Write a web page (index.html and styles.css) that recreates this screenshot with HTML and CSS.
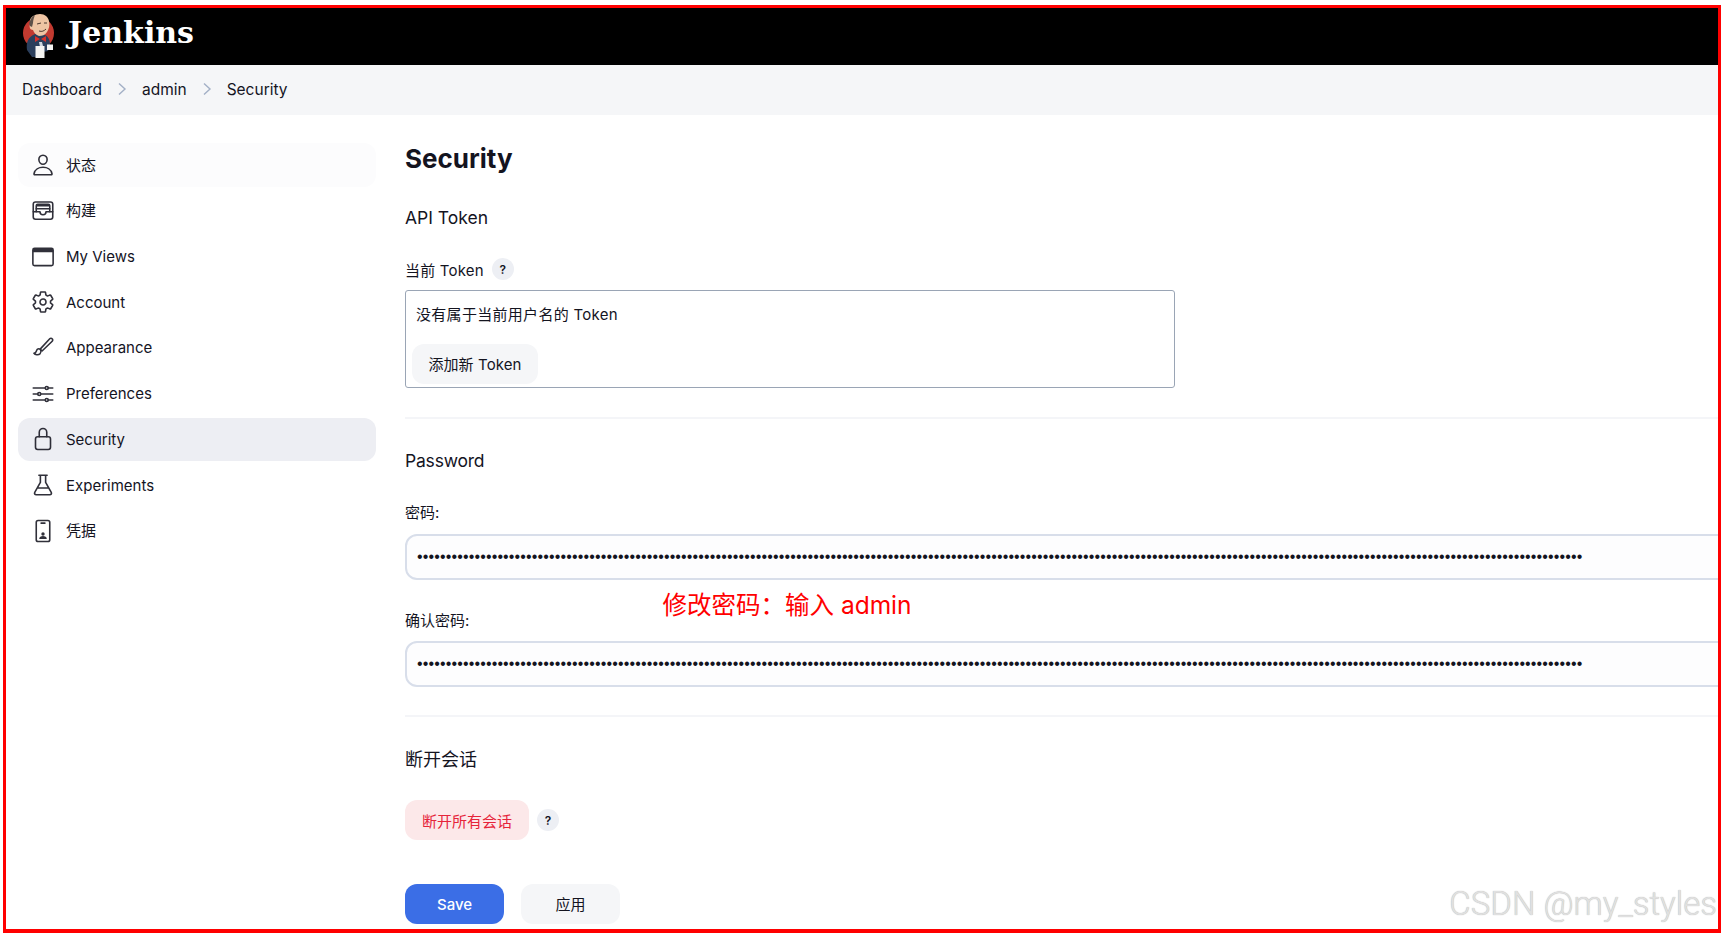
FILE: index.html
```html
<!DOCTYPE html>
<html lang="zh-CN">
<head>
<meta charset="utf-8">
<title>Security - Jenkins</title>
<link rel="stylesheet" href="styles.css">
</head>
<body>
<div class="frame">
  <header class="topbar">
    <svg class="logo" viewBox="0 0 36 46" aria-hidden="true">
      <circle cx="16.500" cy="20" r="15.500" fill="#c23a30"/>
      <path d="M5 37c-1-8 1-13 8-16l10 1c4 2 5 6 5 10l-2 6-5 1v5H10z" fill="#2b3f5c"/>
      <path d="M8 8c0-4 5-7 10-7 5 0 8 3 9 7 1 4 0 8-2 11-2 3-5 4-8 4-3-1-5-3-6-6-3 0-4-3-3-6z" fill="#eec5a4"/>
      <path d="M8 8c1-3 3-5 5-6-1 3-2 5-2 8l-1 4-2-1c-1-2-1-3 0-5z" fill="#5d5149"/>
      <path d="M18 26l-5-3v6zM19 26l5-3v6z" fill="#d6312a"/>
      <path d="M17 29l3 0 1 4-3 1z" fill="#cfd6de"/>
      <path d="M15 11l4-1M22 10l3 0M17 18c3 1 5 0 7-2" stroke="#4d3a30" stroke-width="1" fill="none"/>
      <path d="M13.500 33h9v12h-9z" fill="#f4f4f2"/>
      <path d="M25 31.500h6v5.500h-6z" fill="#f4f4f2"/>
    </svg>
    <span class="wordmark">Jenkins</span>
  </header>
  <nav class="crumbs">
    <a class="crumb">Dashboard</a>
    <svg class="chev" viewBox="0 0 10 14"><path d="M2 1.5l6 5.5-6 5.500"/></svg>
    <a class="crumb">admin</a>
    <svg class="chev" viewBox="0 0 10 14"><path d="M2 1.5l6 5.5-6 5.500"/></svg>
    <a class="crumb">Security</a>
  </nav>
  <div class="content">
    <aside class="side">
      <a class="item item-hover">
        <svg class="ico" viewBox="0 0 512 512"><path d="M344 144c-3.920 52.870-44 96-88 96s-84.150-43.120-88-96c-4-55 35-96 88-96s92 42 88 96z"/><path d="M256 304c-87 0-175.300 48-191.640 138.600C62.390 453.520 68.570 464 80 464h352c11.440 0 17.620-10.480 15.650-21.400C431.300 352 343 304 256 304z"/></svg>
        <span class="cjk">状态</span>
      </a>
      <a class="item">
        <svg class="ico" viewBox="0 0 512 512"><path d="M96 64h320a48 48 0 0148 48v272a48 48 0 01-48 48H96a48 48 0 01-48-48V112a48 48 0 0148-48z"/><path d="M48 272h144M320 272h144M192 272a64 64 0 00128 0M128 144h256M112 208h288"/><path d="M112 272V144q0-30 30-30h228q30 0 30 30v128" fill="none"/></svg>
        <span class="cjk">构建</span>
      </a>
      <a class="item">
        <svg class="ico" viewBox="0 0 512 512"><rect x="40" y="72" width="432" height="368" rx="36"/><path class="solid" d="M40 108a36 36 0 0136-36h360a36 36 0 0136 36v44H40z"/></svg>
        <span>My Views</span>
      </a>
      <a class="item">
        <svg class="ico" viewBox="0 0 512 512"><path d="M262.290 192.310a64 64 0 1057.400 57.400 64.130 64.130 0 00-57.400-57.400zM416.390 256a154.340 154.340 0 01-1.530 20.790l45.210 35.460a10.810 10.810 0 012.450 13.750l-42.770 74a10.810 10.810 0 01-13.140 4.590l-44.900-18.080a16.110 16.110 0 00-15.170 1.750A164.480 164.480 0 01325 400.800a15.940 15.940 0 00-8.820 12.140l-6.730 47.890a11.080 11.080 0 01-10.680 9.170h-85.540a11.110 11.110 0 01-10.690-8.870l-6.720-47.820a16.070 16.070 0 00-9-12.220 155.300 155.300 0 01-21.460-12.570 16 16 0 00-15.110-1.710l-44.890 18.070a10.810 10.810 0 01-13.140-4.580l-42.770-74a10.800 10.800 0 012.450-13.750l38.210-30a16.050 16.050 0 006-14.080c-.36-4.170-.58-8.330-.58-12.500s.21-8.270.58-12.350a16 16 0 00-6.070-13.940l-38.190-30A10.810 10.810 0 0149.48 186l42.770-74a10.810 10.810 0 0113.140-4.590l44.900 18.080a16.110 16.110 0 0015.170-1.750A164.480 164.480 0 01187 111.200a15.940 15.940 0 008.820-12.140l6.730-47.890A11.080 11.080 0 01213.230 42h85.540a11.110 11.110 0 0110.690 8.870l6.720 47.820a16.070 16.070 0 009 12.220 155.300 155.300 0 0121.460 12.570 16 16 0 0015.110 1.710l44.890-18.070a10.810 10.810 0 0113.140 4.580l42.770 74a10.800 10.800 0 01-2.450 13.750l-38.210 30a16.050 16.050 0 00-6.050 14.080c.33 4.140.55 8.300.55 12.470z"/></svg>
        <span>Account</span>
      </a>
      <a class="item">
        <svg class="ico" viewBox="0 0 512 512"><path d="M452 60a36 36 0 00-52 0L196 280l40 40L452 112a36 36 0 000-52z"/><path d="M170 300c-34 0-48 26-56 56-6 26-26 42-54 46 24 36 100 50 142 8 34-36 12-110-32-110z" transform="translate(6 -10) scale(.94)"/></svg>
        <span>Appearance</span>
      </a>
      <a class="item">
        <svg class="ico" viewBox="0 0 512 512"><path d="M368 128h96M48 128h256M368 384h96M48 384h256M208 256h256M48 256h96"/><circle cx="336" cy="128" r="32"/><circle cx="336" cy="384" r="32"/><circle cx="176" cy="256" r="32"/></svg>
        <span>Preferences</span>
      </a>
      <a class="item item-active">
        <svg class="ico" viewBox="0 0 512 512"><path d="M336 208v-95a80 80 0 00-160 0v95"/><rect x="96" y="208" width="320" height="272" rx="48"/></svg>
        <span>Security</span>
      </a>
      <a class="item">
        <svg class="ico" viewBox="0 0 512 512"><path d="M168 48h176M200 48v152L80 412c-14 26 2 52 32 52h288c30 0 46-26 32-52L312 200V48M132 320h248"/></svg>
        <span>Experiments</span>
      </a>
      <a class="item">
        <svg class="ico" viewBox="0 0 512 512"><rect x="112" y="32" width="288" height="448" rx="40"/><path d="M216 88h80"/><circle class="solid" cx="256" cy="320" r="36"/><path class="solid" d="M176 424c0-40 36-60 80-60s80 20 80 60z"/></svg>
        <span class="cjk">凭据</span>
      </a>
    </aside>
    <main class="main">
      <h1 class="title">Security</h1>
      <h2 class="sect sect-first">API Token</h2>
      <div class="label-row">
        <span>当前 Token</span>
        <span class="help">?</span>
      </div>
      <div class="token-box">
        <p class="token-empty">没有属于当前用户名的 Token</p>
        <button class="btn btn-add" type="button">添加新 Token</button>
      </div>
      <hr class="rule">
      <h2 class="sect sect-pw">Password</h2>
      <label class="field-label">密码:</label>
      <input class="pw pw-first" type="password" value="•••••••••••••••••••••••••••••••••••••••••••••••••••••••••••••••••••••••••••••••••••••••••••••••••••••••••••••••••••••••••••••••••••••••••••••••••••••••••••••••••••••••••••••••••••••••••••••••••••••••••••">
      <label class="field-label field-label-2">确认密码:</label>
      <input class="pw" type="password" value="•••••••••••••••••••••••••••••••••••••••••••••••••••••••••••••••••••••••••••••••••••••••••••••••••••••••••••••••••••••••••••••••••••••••••••••••••••••••••••••••••••••••••••••••••••••••••••••••••••••••••••">
      <hr class="rule rule-2">
      <h2 class="sect sect-cjk">断开会话</h2>
      <div class="session-row">
        <button class="btn btn-danger" type="button">断开所有会话</button>
        <span class="help">?</span>
      </div>
      <div class="actions">
        <button class="btn btn-save" type="button">Save</button>
        <button class="btn btn-apply" type="button">应用</button>
      </div>
    </main>
  </div>
  <div class="note">修改密码：输入 admin</div>
  <div class="mark">CSDN @my_styles</div>
</div>
</body>
</html>
```
FILE: styles.css
```css
* { box-sizing: border-box; }
html, body { margin: 0; padding: 0; height: 100%; background: #fff; overflow: hidden; }
body { font-family: Inter, "Noto Sans CJK SC", sans-serif; font-size: 15px; color: #14141f; }
.frame { position: relative; margin: 5px 1px 0 3px; height: 928px; border: 3px solid #f00; border-bottom-width: 4px; overflow: hidden; background: #fff; }
.topbar { height: 57px; background: #000; display: flex; align-items: center; padding-left: 16px; }
.logo { width: 36px; height: 46px; margin-top: -2px; }
.wordmark { margin-left: 10px; font-family: "DejaVu Serif", serif; font-weight: 700; font-size: 30px; color: #fff; margin-top: -8px; }
.crumbs { height: 50px; background: #f5f6f8; display: flex; align-items: center; padding: 0 0 2px 16px; font-size: 15.5px; }
.crumb { color: #14141f; }
.chev { width: 10px; height: 14px; margin: 0 15px; fill: none; stroke: #a3b0c6; stroke-width: 1.4; }
.content { display: flex; gap: 29px; }
.side { width: 358px; margin-left: 12px; padding-top: 28.4px; display: flex; flex-direction: column; gap: 2px; flex: none; }
.item { height: 43.7px; border-radius: 12px; display: flex; align-items: center; gap: 11px; padding-left: 13px; color: #14141f; }
.item-hover { background: #fcfcfd; }
.item-active { background: #edeef3; }
.cjk { padding-bottom: 2px; }
.ico { width: 24px; height: 24px; flex: none; fill: none; stroke: #14141f; stroke-width: 34; stroke-linecap: round; stroke-linejoin: round; opacity: .88; }
.ico .solid { fill: #14141f; stroke: none; }
.main { flex: 1; min-width: 0; padding-top: 28px; }
.title { margin: 0; font-size: 26px; line-height: 32px; font-weight: 700; }
.sect { margin: 30px 0 0; font-size: 17.5px; line-height: 24px; font-weight: 400; }
.sect-first { margin-top: 31px; }
.sect-pw { letter-spacing: -.2px; }
.sect-cjk { margin-top: 31px; font-size: 18px; }
.label-row { margin-top: 28px; height: 22px; display: flex; align-items: center; gap: 8px; letter-spacing: .2px; }
.help { width: 22px; height: 22px; border-radius: 50%; background: #edeff4; font-size: 12px; font-weight: 600; display: flex; align-items: center; justify-content: center; flex: none; }
.token-box { margin-top: 10px; width: 770px; height: 98px; border: 1px solid #9aa5b5; border-radius: 3px; padding: 14px 0 0 6px; }
.token-empty { margin: 0 0 19px 4px; line-height: 20px; letter-spacing: .3px; }
.btn { height: 40px; border: 0; border-radius: 12px; font: inherit; color: inherit; padding: 0; display: block; }
.btn-add { width: 126px; background: #f5f6f8; padding-bottom: 2px; letter-spacing: .1px; }
.rule { margin: 29px 0 0; border: 0; height: 2px; background: #f4f5f8; width: 100%; }
.rule-2 { margin-top: 28px; }
.field-label { display: block; margin-top: 30px; line-height: 20px; }
.field-label-2 { margin-top: 31px; }
.pw { display: block; margin-top: 10px; width: 1360px; height: 46px; border: 2px solid #d8deea; border-radius: 12px; background: #fdfdfe; padding: 0 10px; font-family: "Liberation Sans", sans-serif; font-size: 16px; letter-spacing: .14px; color: #14141f; outline: 0; }
.pw-first { margin-top: 11px; }
.session-row { margin-top: 28px; display: flex; align-items: center; gap: 8px; }
.btn-danger { width: 124px; background: #fce8e9; color: #e6243a; }
.actions { margin-top: 44px; display: flex; gap: 17px; }
.btn-save { width: 99px; background: #3b6ee6; color: #fff; font-weight: 500; }
.btn-apply { width: 99px; background: #f5f6f8; padding-bottom: 1px; }
.note { position: absolute; left: 656.500px; top: 581px; font-size: 24.500px; line-height: 32px; color: #f00; white-space: nowrap; }
.mark { position: absolute; right: 1px; top: 875px; font-family: Roboto, sans-serif; font-weight: 300; font-size: 33px; line-height: 42px; color: #e0e0e0; text-shadow: 0 0 1px #aaa; white-space: nowrap; }
```
